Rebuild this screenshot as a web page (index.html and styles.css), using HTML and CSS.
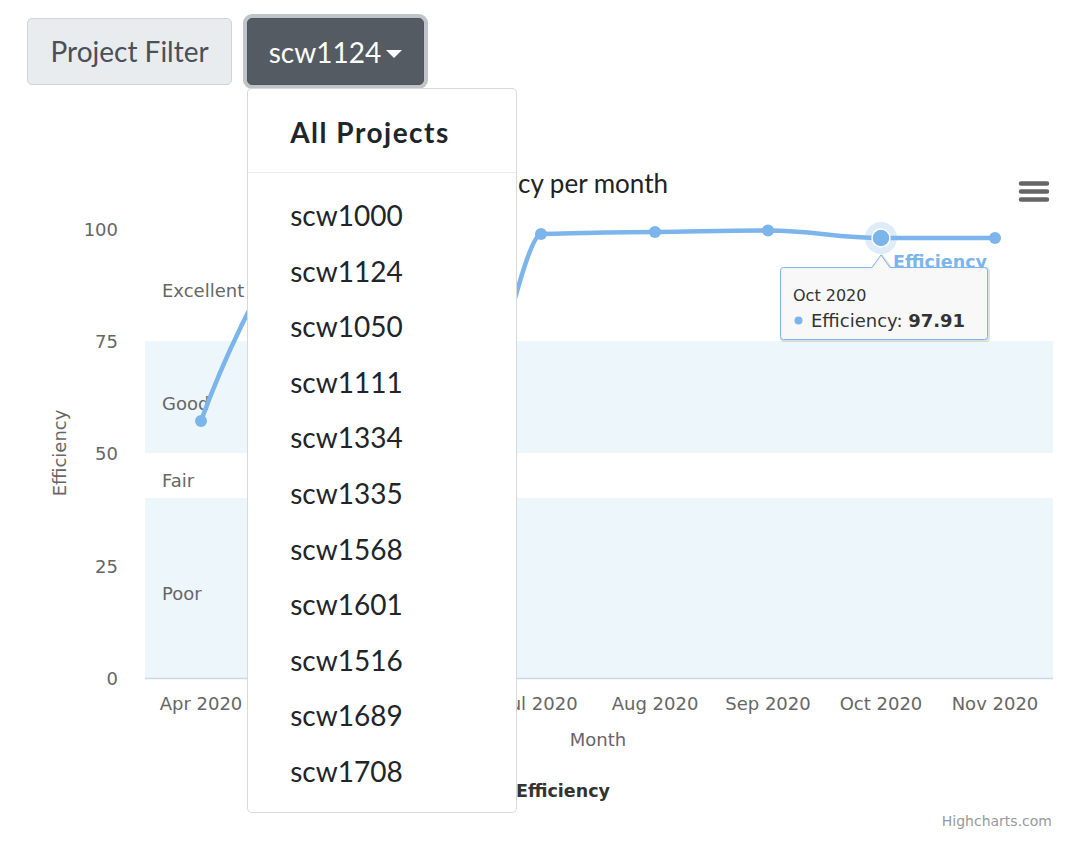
FILE: index.html
```html
<!DOCTYPE html>
<html lang="en">
<head>
<meta charset="utf-8">
<title>Efficiency per month</title>
<link rel="stylesheet" href="styles.css">
</head>
<body>
<div class="toolbar">
  <span class="filter-label">Project Filter</span>
  <div class="dropdown">
    <button class="btn-project" type="button">scw1124<span class="caret"></span></button>
    <div class="menu">
      <div class="menu-header">All Projects</div>
      <div class="menu-divider"></div>
      <a class="menu-item">scw1000</a>
      <a class="menu-item">scw1124</a>
      <a class="menu-item">scw1050</a>
      <a class="menu-item">scw1111</a>
      <a class="menu-item">scw1334</a>
      <a class="menu-item">scw1335</a>
      <a class="menu-item">scw1568</a>
      <a class="menu-item">scw1601</a>
      <a class="menu-item">scw1516</a>
      <a class="menu-item">scw1689</a>
      <a class="menu-item">scw1708</a>
    </div>
  </div>
</div>
<svg class="chart" width="1074" height="762" viewBox="0 100 1074 762" xmlns="http://www.w3.org/2000/svg">
  <text class="title" x="668" y="193" text-anchor="end">Efficiency per month</text>
  <path class="menu-icon" d="M1021 183.5H1047M1021 191.5H1047M1021 199.5H1047"/>

  <rect class="band" x="145" y="341" width="908" height="112"/>
  <rect class="band" x="145" y="498" width="908" height="180"/>
  <path class="axis-line" d="M145 678.5H1053"/>

  <text class="band-label" x="162" y="297">Excellent</text>
  <text class="band-label" x="162" y="410">Good</text>
  <text class="band-label" x="162" y="487">Fair</text>
  <text class="band-label" x="162" y="600">Poor</text>

  <g class="y-labels" text-anchor="end">
    <text x="118" y="236">100</text>
    <text x="118" y="348">75</text>
    <text x="118" y="460">50</text>
    <text x="118" y="573">25</text>
    <text x="118" y="685">0</text>
  </g>
  <text class="axis-title" transform="translate(66 453) rotate(-90)" text-anchor="middle">Efficiency</text>

  <g class="x-labels" text-anchor="middle">
    <text x="201" y="710">Apr 2020</text>
    <text x="541" y="710">Jul 2020</text>
    <text x="655" y="710">Aug 2020</text>
    <text x="768" y="710">Sep 2020</text>
    <text x="881" y="710">Oct 2020</text>
    <text x="995" y="710">Nov 2020</text>
  </g>
  <text class="axis-title" x="598" y="746" text-anchor="middle">Month</text>

  <path class="series" d="M201 421C201 421 268.8 234 314 234C360 234 400 543 428 543C480 480 520 238 541 234C586 233 610 232 655 232C700 231.5 723 230.5 768 230.5C813 230.5 836 238 881 238C926 238 950 238 995 238"/>
  <g class="markers">
    <circle cx="201" cy="421" r="6"/>
    <circle cx="314" cy="234" r="6"/>
    <circle cx="428" cy="543" r="6"/>
    <circle cx="541" cy="234" r="6"/>
    <circle cx="655" cy="232" r="6"/>
    <circle cx="768" cy="230.5" r="6"/>
    <circle cx="995" cy="238" r="6"/>
  </g>
  <circle class="halo" cx="881" cy="238" r="16"/>
  <circle class="hover-marker" cx="881" cy="238" r="9"/>
  <text class="series-label" x="893" y="268">Efficiency</text>

  <text class="legend" x="516" y="797">Efficiency</text>
  <text class="credits" x="1052" y="826" text-anchor="end">Highcharts.com</text>

  <g class="tooltip">
    <path class="tooltip-shadow" transform="translate(1 1)" d="M783.5 267.5H872L881 255L890 267.5H984.5Q987.5 267.5 987.5 270.5V336.5Q987.5 339.5 984.5 339.5H783.5Q780.5 339.5 780.5 336.5V270.5Q780.5 267.5 783.5 267.5Z"/>
    <path class="tooltip-box" d="M783.5 267.5H872L881 255L890 267.5H984.5Q987.5 267.5 987.5 270.5V336.5Q987.5 339.5 984.5 339.5H783.5Q780.5 339.5 780.5 336.5V270.5Q780.5 267.5 783.5 267.5Z"/>
    <text class="tooltip-head" x="793" y="301">Oct 2020</text>
    <circle class="tooltip-dot" cx="798.5" cy="320.5" r="4"/>
    <text class="tooltip-body" x="811" y="327">Efficiency: <tspan class="tooltip-value">97.91</tspan></text>
  </g>
</svg>
</body>
</html>
```
FILE: styles.css
```css
html, body {
  margin: 0;
  padding: 0;
  background: #ffffff;
}

body {
  width: 1074px;
  height: 862px;
  overflow: hidden;
  font-family: Lato, "Noto Sans", sans-serif;
}

.toolbar {
  display: flex;
  align-items: flex-start;
  gap: 15px;
  height: 100px;
  box-sizing: border-box;
  padding: 18px 0 0 27px;
}

.filter-label {
  display: block;
  box-sizing: border-box;
  height: 67px;
  padding: 0 22.5px;
  line-height: 65px;
  font-size: 28px;
  color: #495057;
  background: #e9ecef;
  border: 1px solid #ced4da;
  border-radius: 5px;
}

.dropdown {
  position: relative;
  z-index: 5;
}

.btn-project {
  display: flex;
  align-items: center;
  box-sizing: border-box;
  height: 67px;
  margin: 0;
  padding: 0 20.5px;
  font-family: Lato, "Noto Sans", sans-serif;
  font-size: 28px;
  color: #ffffff;
  background: #545b62;
  border: 1px solid #4e555b;
  border-radius: 5px;
  box-shadow: 0 0 0 4px rgba(130, 138, 145, 0.5);
}

.caret {
  display: block;
  width: 0;
  height: 0;
  margin: 4px 0 0 5px;
  border-top: 8px solid #ffffff;
  border-left: 8px solid transparent;
  border-right: 8px solid transparent;
}

.menu {
  position: absolute;
  top: calc(100% + 3px);
  left: 0;
  width: 270px;
  box-sizing: border-box;
  padding: 15px 0 12px;
  background: #ffffff;
  border: 1px solid rgba(0, 0, 0, 0.15);
  border-radius: 5px;
}

.menu-header {
  height: 56px;
  line-height: 56px;
  padding-left: 42px;
  font-size: 28px;
  font-weight: 700;
  letter-spacing: 1.5px;
  color: #212529;
}

.menu-divider {
  margin: 12px 0 15px;
  border-top: 1px solid #e9ecef;
}

.menu-item {
  display: block;
  height: 55.6px;
  line-height: 55.6px;
  padding-left: 42px;
  font-size: 28px;
  color: #212529;
}

.chart {
  display: block;
  font-family: "DejaVu Sans", Verdana, sans-serif;
}

.title {
  font-family: Lato, "Noto Sans", sans-serif;
  font-size: 26px;
  fill: #222222;
}

.menu-icon {
  fill: none;
  stroke: #666666;
  stroke-width: 4.5;
  stroke-linecap: round;
}

.band {
  fill: rgba(68, 170, 213, 0.1);
}

.axis-line {
  fill: none;
  stroke: #ccd6eb;
  stroke-width: 1.5;
}

.band-label,
.y-labels text,
.x-labels text {
  font-size: 18px;
  fill: #666666;
}

.axis-title {
  font-size: 18px;
  fill: #666666;
}

.series {
  fill: none;
  stroke: #7cb5ec;
  stroke-width: 4.5;
  stroke-linecap: round;
  stroke-linejoin: round;
}

.markers circle {
  fill: #7cb5ec;
}

.halo {
  fill: #7cb5ec;
  opacity: 0.25;
}

.hover-marker {
  fill: #7cb5ec;
  stroke: #ffffff;
  stroke-width: 1.5;
}

.series-label {
  font-size: 17.5px;
  font-weight: 700;
  fill: #7cb5ec;
}

.legend {
  font-size: 17.5px;
  font-weight: 700;
  fill: #333333;
}

.credits {
  font-size: 14px;
  fill: #999999;
}

.tooltip-shadow {
  fill: none;
  stroke: rgba(0, 0, 0, 0.12);
  stroke-width: 3;
}

.tooltip-box {
  fill: rgba(247, 247, 247, 0.9);
  stroke: #7cb5ec;
  stroke-width: 1;
}

.tooltip-head {
  font-size: 16px;
  fill: #333333;
}

.tooltip-dot {
  fill: #7cb5ec;
}

.tooltip-body {
  font-size: 18px;
  fill: #333333;
}

.tooltip-value {
  font-weight: 700;
}
```
